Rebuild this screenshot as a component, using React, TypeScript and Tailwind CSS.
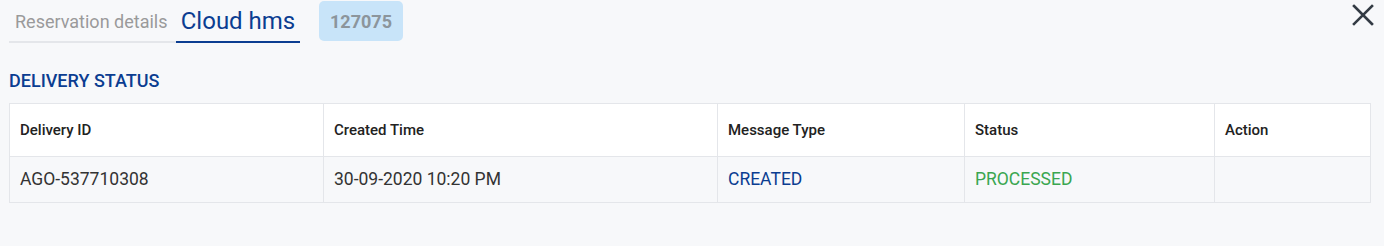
import React from "react";

export default function App() {
  const cols = [
    { title: "Delivery ID", w: "w-[314px]" },
    { title: "Created Time", w: "w-[394px]" },
    { title: "Message Type", w: "w-[247px]" },
    { title: "Status", w: "w-[250px]" },
    { title: "Action", w: "flex-1" },
  ];
  return (
    <div className="w-[1384px] h-[246px] bg-[#f7f8fa] font-['Roboto',sans-serif] relative">
      <div className="flex items-start pl-[9px]">
        <div className="flex">
          <div className="w-[167px] h-[43px] pl-[6px] flex items-center border-b-2 border-[#e4e6ea] text-[18px] text-[#9a9a9a] pt-[1px] whitespace-nowrap">
            Reservation details
          </div>
          <div className="w-[124px] h-[43px] flex items-center justify-center border-b-2 border-[#0b3d91] text-[24px] text-[#0b3d91] pt-[1px] whitespace-nowrap">
            Cloud hms
          </div>
        </div>
        <div className="ml-[19px] mt-[1px] w-[84px] h-[40px] rounded-[5px] bg-[#c8e4f9] flex items-center justify-center text-[18px] font-bold text-[#8c959c]">
          127075
        </div>
      </div>
      <button className="absolute right-[10px] top-[4px] w-[22px] h-[22px] flex items-center justify-center">
        <svg width="22" height="22" viewBox="0 0 22 22">
          <path d="M2 2 L20 20 M20 2 L2 20" stroke="#333b44" strokeWidth="2.6" strokeLinecap="square" />
        </svg>
      </button>
      <div className="pl-[9px] mt-[28px] text-[18px] font-medium text-[#0b3d91] leading-[20px]">
        DELIVERY STATUS
      </div>
      <div className="ml-[9px] mt-[12px] w-[1362px] border border-[#e4e6ea]">
        <div className="flex bg-white h-[53px] border-b border-[#e4e6ea]">
          {cols.map((c, i) => (
            <div
              key={c.title}
              className={`${c.w} flex items-center px-[10px] text-[15px] font-medium text-[#222] ${i < cols.length - 1 ? "border-r border-[#e4e6ea]" : ""}`}
            >
              {c.title}
            </div>
          ))}
        </div>
        <div className="flex bg-[#f7f8fa] h-[45px] text-[17.5px]">
          <div className="w-[314px] flex items-center px-[10px] text-[#333] border-r border-[#e4e6ea]">AGO-537710308</div>
          <div className="w-[394px] flex items-center px-[10px] text-[#333] border-r border-[#e4e6ea]">30-09-2020 10:20 PM</div>
          <div className="w-[247px] flex items-center px-[10px] text-[#0b3d91] border-r border-[#e4e6ea]">CREATED</div>
          <div className="w-[250px] flex items-center px-[10px] text-[#3aa650] border-r border-[#e4e6ea]">PROCESSED</div>
          <div className="flex-1" />
        </div>
      </div>
    </div>
  );
}
